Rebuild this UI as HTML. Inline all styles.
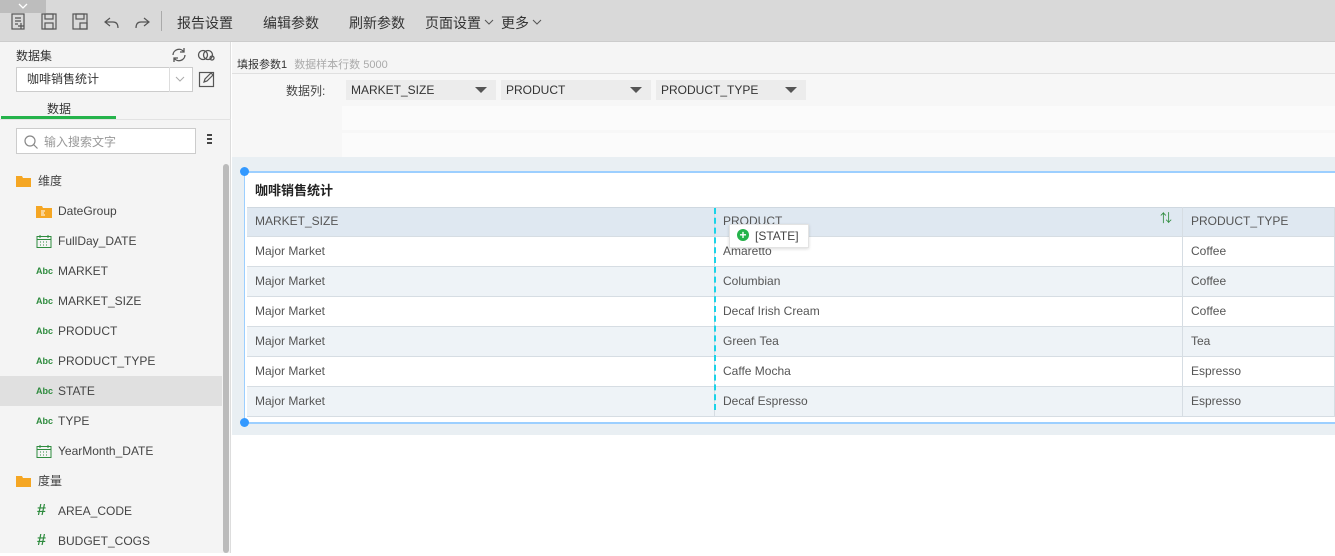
<!DOCTYPE html>
<html><head><meta charset="utf-8"><style>
*{box-sizing:border-box;margin:0;padding:0}
body{width:1335px;height:553px;overflow:hidden;font-family:"Liberation Sans","Noto Sans CJK SC",sans-serif;font-size:12px;color:#333;background:#fff;position:relative}
.abs{position:absolute}
.tb{left:0;top:0;width:1335px;height:42px;background:#d9d9d9;border-bottom:1px solid #ccc}
.tb span{position:absolute;top:13px;font-size:14px;color:#333}
.left{left:0;top:42px;width:231px;height:511px;background:#f4f4f4;border-right:1px solid #ddd}
.item{position:absolute;left:0;width:222px;height:30px;line-height:30px;font-size:12px;color:#444}
.abc{position:absolute;left:36px;font-size:9px;font-weight:bold;color:#2e8b3e}
.cell{position:absolute;height:30px;line-height:28px;padding-left:8px;font-size:12px;color:#555;border-bottom:1px solid #d6dde3;border-right:1px solid #d6dde3}
.sel{position:absolute;top:80px;height:20px;line-height:20px;background:#ececec;padding-left:5px;font-size:12px;color:#333}
.sel:after{content:"";position:absolute;right:9px;top:7px;border-left:6px solid transparent;border-right:6px solid transparent;border-top:6px solid #555}
</style></head><body>
<div class="abs tb">
<div class="abs" style="left:0;top:0;width:46px;height:13px;background:#bdbdbd"></div>
<svg class="abs" style="left:17px;top:2px" width="12" height="8"><path d="M2 2l4 4 4-4" stroke="#fff" fill="none" stroke-width="1.3"/></svg>
<svg class="abs" style="left:10px;top:12px" width="150" height="20" fill="none" stroke="#555" stroke-width="1.2">
<rect x="2" y="2" width="12" height="15"/><path d="M5 6h6M5 9h6M5 12h3M11 11v6M8 14h6"/>
<rect x="32" y="2" width="14" height="15"/><rect x="35" y="2" width="8" height="5"/><rect x="35" y="11" width="8" height="6"/>
<rect x="63" y="2" width="14" height="15"/><rect x="66" y="2" width="8" height="5"/><rect x="70" y="11" width="7" height="6"/>
<path d="M100 6l-5 4 5 4M95 10h8c4 0 5 3 5 6"/>
<path d="M134 6l5 4-5 4M139 10h-8c-4 0-5 3-5 6"/>
</svg>
<div class="abs" style="left:161px;top:11px;width:1px;height:20px;background:#aaa"></div>
<span style="left:177px">报告设置</span><span style="left:263px">编辑参数</span><span style="left:349px">刷新参数</span><span style="left:425px">页面设置</span><span style="left:501px">更多</span>
<svg class="abs" style="left:484px;top:18px" width="10" height="8"><path d="M1 2l4 4 4-4" stroke="#555" fill="none"/></svg>
<svg class="abs" style="left:532px;top:18px" width="10" height="8"><path d="M1 2l4 4 4-4" stroke="#555" fill="none"/></svg>
</div>
<div class="abs left">
<div class="abs" style="left:16px;top:5px;font-size:12px">数据集</div>
<svg class="abs" style="left:170px;top:4px" width="50" height="18" fill="none" stroke="#555" stroke-width="1.3"><path d="M3 9a6 6 0 0 1 11-3M15 9a6 6 0 0 1-11 3M14 2v4h-4M4 16v-4h4"/><circle cx="33" cy="9" r="4.5"/><circle cx="38" cy="9" r="4.5"/><circle cx="42" cy="12" r="2"/></svg>
<div class="abs" style="left:16px;top:25px;width:177px;height:25px;background:#fff;border:1px solid #ccc;line-height:23px;padding-left:10px">咖啡销售统计</div>
<div class="abs" style="left:169px;top:25px;width:1px;height:25px;background:#ddd"></div>
<svg class="abs" style="left:173px;top:33px" width="14" height="8"><path d="M3 2l4 4 4-4" stroke="#aaa" fill="none"/></svg>
<svg class="abs" style="left:198px;top:28px" width="18" height="18" fill="none" stroke="#555" stroke-width="1.2"><rect x="1.5" y="2.5" width="14" height="14"/><path d="M6 12l1-3 6-6 2 2-6 6z"/></svg>
<div class="abs" style="left:47px;top:58px">数据</div>
<div class="abs" style="left:1px;top:74px;width:115px;height:3px;background:#25b34b"></div>
<div class="abs" style="left:0;top:77px;width:231px;height:1px;background:#e2e2e2"></div>
<div class="abs" style="left:16px;top:86px;width:180px;height:26px;background:#fff;border:1px solid #ccc"></div>
<svg class="abs" style="left:23px;top:92px" width="16" height="16" fill="none" stroke="#888" stroke-width="1.2"><circle cx="7" cy="7" r="5"/><path d="M10.5 10.5l4 4"/></svg>
<div class="abs" style="left:44px;top:91px;color:#999">输入搜索文字</div>
<div class="abs" style="left:207px;top:92px;width:5px;height:2px;background:#444;box-shadow:0 4px #444,0 8px #444"></div>
<div class="abs" style="left:223px;top:122px;width:6px;height:389px;background:#bbb;border-radius:3px"></div>
<div class="item" style="top:124px"><svg class="abs" style="left:16px;top:9px" width="16" height="12"><path d="M0 1h6l1 2h8v9H0z" fill="#f5a623"/></svg><span class="abs" style="left:38px">维度</span></div>
<div class="item" style="top:154px"><svg class="abs" style="left:36px;top:8px" width="16" height="14"><path d="M0 2h6l1 2h9v10H0z" fill="#f5a623"/><path d="M5 7h4M5 9h3M5 11h4" stroke="#fff"/></svg><span class="abs" style="left:58px">DateGroup</span></div>
<div class="item" style="top:184px"><svg class="abs" style="left:36px;top:8px" width="16" height="15" fill="none" stroke="#2e8b3e"><rect x="1" y="2.5" width="14" height="11"/><path d="M1 5.5h14M4 1v3M12 1v3M4 8h1M7 8h1M10 8h1M4 11h1M7 11h1M10 11h1"/></svg><span class="abs" style="left:58px">FullDay_DATE</span></div>
<div class="item" style="top:214px"><span class="abc">Abc</span><span class="abs" style="left:58px">MARKET</span></div>
<div class="item" style="top:244px"><span class="abc">Abc</span><span class="abs" style="left:58px">MARKET_SIZE</span></div>
<div class="item" style="top:274px"><span class="abc">Abc</span><span class="abs" style="left:58px">PRODUCT</span></div>
<div class="item" style="top:304px"><span class="abc">Abc</span><span class="abs" style="left:58px">PRODUCT_TYPE</span></div>
<div class="item" style="top:334px;background:#e0e0e0"><span class="abc">Abc</span><span class="abs" style="left:58px">STATE</span></div>
<div class="item" style="top:364px"><span class="abc">Abc</span><span class="abs" style="left:58px">TYPE</span></div>
<div class="item" style="top:394px"><svg class="abs" style="left:36px;top:8px" width="16" height="15" fill="none" stroke="#2e8b3e"><rect x="1" y="2.5" width="14" height="11"/><path d="M1 5.5h14M4 1v3M12 1v3M4 8h1M7 8h1M10 8h1M4 11h1M7 11h1M10 11h1"/></svg><span class="abs" style="left:58px">YearMonth_DATE</span></div>
<div class="item" style="top:424px"><svg class="abs" style="left:16px;top:9px" width="16" height="12"><path d="M0 1h6l1 2h8v9H0z" fill="#f5a623"/></svg><span class="abs" style="left:38px">度量</span></div>
<div class="item" style="top:454px"><span class="abs" style="left:37px;font-size:16px;font-weight:bold;color:#2e8b3e">#</span><span class="abs" style="left:58px">AREA_CODE</span></div>
<div class="item" style="top:484px"><span class="abs" style="left:37px;font-size:16px;font-weight:bold;color:#2e8b3e">#</span><span class="abs" style="left:58px">BUDGET_COGS</span></div>
</div>
<div class="abs" style="left:232px;top:42px;width:1103px;height:32px;background:#f5f5f5"></div>
<div class="abs" style="left:237px;top:56px;font-size:11px;color:#333">填报参数1 <span style="color:#aaa;margin-left:4px">数据样本行数 5000</span></div>
<div class="abs" style="left:232px;top:73px;width:1103px;height:1px;background:#e0e0e0"></div>
<div class="abs" style="left:232px;top:74px;width:1103px;height:83px;background:#f7f7f7"></div>
<div class="abs" style="left:286px;top:82px;color:#444">数据列:</div>
<div class="sel" style="left:346px;width:150px">MARKET_SIZE</div>
<div class="sel" style="left:501px;width:150px">PRODUCT</div>
<div class="sel" style="left:656px;width:150px">PRODUCT_TYPE</div>
<div class="abs" style="left:342px;top:106px;width:993px;height:24px;background:#fbfbfb"></div>
<div class="abs" style="left:342px;top:133px;width:993px;height:24px;background:#fbfbfb"></div>
<div class="abs" style="left:232px;top:157px;width:1103px;height:278px;background:#e9eff3"></div>
<div class="abs" style="left:244px;top:171px;width:1091px;height:253px;background:#fff;border-top:2px solid #9ccfff;border-bottom:2px solid #9ccfff;border-left:1px solid #9ccfff"></div>
<div class="abs" style="left:240px;top:167px;width:9px;height:9px;border-radius:50%;background:#3399ff"></div>
<div class="abs" style="left:240px;top:418px;width:9px;height:9px;border-radius:50%;background:#3399ff"></div>
<div class="abs" style="left:255px;top:180px;font-size:13px;font-weight:bold;color:#222">咖啡销售统计</div>
<div class="abs" style="left:247px;top:207px;width:1088px;height:30px;background:#dfe8f1;border-top:1px solid #cfd8e0"></div>
<div class="cell" style="left:247px;top:207px;width:468px">MARKET_SIZE</div>
<div class="cell" style="left:715px;top:207px;width:468px">PRODUCT</div>
<div class="cell" style="left:1183px;top:207px;width:152px">PRODUCT_TYPE</div>
<div class="abs" style="left:1160px;top:209px;color:#2e8b3e;font-size:12px">⇅</div>
<div class="cell" style="left:247px;top:237px;width:468px">Major Market</div><div class="cell" style="left:715px;top:237px;width:468px">Amaretto</div><div class="cell" style="left:1183px;top:237px;width:152px">Coffee</div>
<div class="cell" style="left:247px;top:267px;width:468px;background:#eef3f7">Major Market</div><div class="cell" style="left:715px;top:267px;width:468px;background:#eef3f7">Columbian</div><div class="cell" style="left:1183px;top:267px;width:152px;background:#eef3f7">Coffee</div>
<div class="cell" style="left:247px;top:297px;width:468px">Major Market</div><div class="cell" style="left:715px;top:297px;width:468px">Decaf Irish Cream</div><div class="cell" style="left:1183px;top:297px;width:152px">Coffee</div>
<div class="cell" style="left:247px;top:327px;width:468px;background:#eef3f7">Major Market</div><div class="cell" style="left:715px;top:327px;width:468px;background:#eef3f7">Green Tea</div><div class="cell" style="left:1183px;top:327px;width:152px;background:#eef3f7">Tea</div>
<div class="cell" style="left:247px;top:357px;width:468px">Major Market</div><div class="cell" style="left:715px;top:357px;width:468px">Caffe Mocha</div><div class="cell" style="left:1183px;top:357px;width:152px">Espresso</div>
<div class="cell" style="left:247px;top:387px;width:468px;background:#eef3f7">Major Market</div><div class="cell" style="left:715px;top:387px;width:468px;background:#eef3f7">Decaf Espresso</div><div class="cell" style="left:1183px;top:387px;width:152px;background:#eef3f7">Espresso</div>
<div class="abs" style="left:714px;top:208px;width:0;height:202px;border-left:2px dashed #1ad3e8"></div>
<div class="abs" style="left:729px;top:224px;width:80px;height:24px;background:#fff;border:1px solid #e3e3e3;box-shadow:0 1px 3px rgba(0,0,0,.15);line-height:22px;padding-left:25px;color:#444">[STATE]</div>
<div class="abs" style="left:737px;top:229px;width:12px;height:12px;border-radius:50%;background:#25b34b;color:#fff;font-size:12px;line-height:12px;text-align:center;font-weight:bold">+</div>
</body></html>
